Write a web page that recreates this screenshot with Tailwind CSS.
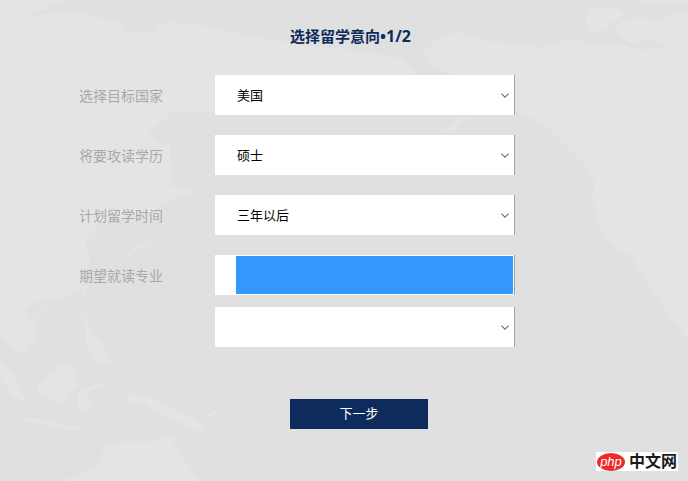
<!DOCTYPE html>
<html lang="zh">
<head>
<meta charset="utf-8">
<script src="https://cdn.jsdelivr.net/npm/@tailwindcss/browser@4"></script>
</head>
<body class="m-0">
<main class="relative w-[688px] h-[481px] overflow-hidden bg-[#e0e0e0] font-['Liberation_Sans','Noto_Sans_CJK_SC',sans-serif]">
  <svg class="absolute inset-0" width="688" height="481" viewBox="0 0 688 481" fill="#e4e4e4" aria-hidden="true">
    <!-- Asia -->
    <path d="M0 0H70L50 4 31 15 35 16 60 12 90 15 118 22 125 33 155 32 165 22 200 25 230 32 300 45 350 50 400 58 415 72 400 100 395 112H173L148 133 160 145 170 143 172 187 197 190 173 200 147 213 100 224 85 240 90 258 80 290 60 300 40 300 25 310 35 325 38 335 20 353 0 335Z"/>
    <path d="M123 257L135 245 157 240 140 248 128 257Z"/>
    <path d="M81 297L83 285 88 286 86 297Z"/>
    <path d="M35 314L40 308 44 309 40 315Z"/>
    <!-- North America -->
    <path d="M422 52L440 38 460 32 480 40 520 44 540 48 575 38 590 45 620 45 640 50 688 44V340L671 320 654 293 632 257 605 240 592 200 595 185 590 170 560 140 545 125 517 110 480 105 470 80 432 68 430 60Z"/>
    <path d="M585 20L593 7 620 9 625 15 612 22 606 30 592 32Z"/>
    <path d="M615 25L640 17 660 22 655 34 635 45 618 36Z"/>
    <path d="M655 22L670 14 688 12V48L672 46 650 40Z"/>
    <path d="M630 0H688V3L660 5Z"/>
    <path d="M441 130L460 117 477 116 465 122 450 133Z"/>
    <!-- Southeast Asia and Oceania -->
    <path d="M84 315L88 318 90 332 100 342 107 352 110 362 100 365 92 356 86 340Z"/>
    <path d="M37 385L50 372 68 362 76 375 78 385 70 392 62 407 48 397 40 398Z"/>
    <path d="M0 360L12 372 18 385 27 403 14 397 0 378Z"/>
    <path d="M23 417L45 420 65 425 83 428 70 431 45 425 28 421Z"/>
    <path d="M80 388L100 383 102 386 90 390 88 397 92 408 84 413 77 405Z"/>
    <path d="M125 396L135 393 150 398 170 408 195 420 207 434 195 430 175 420 155 412 145 404 130 402Z"/>
    <path d="M200 416L212 414 217 407 216 414 207 418Z"/>
    <path d="M63 481L96 466 105 447 120 442 145 442 162 438 172 437 178 452 190 468 200 481Z"/>
  </svg>
  <div class="relative flex flex-col items-stretch">
    <h1 class="ml-[290px] mt-[28px] h-[17px] text-[15px] leading-[17px] font-bold text-[#0e2b5e] whitespace-nowrap">选择留学意向<span class="font-['Open_Sans',sans-serif] text-[16px]">•1/2</span></h1>
    <div class="mt-[30px] flex flex-col gap-[20px]">
      <div class="flex h-[40px] items-center">
        <label class="ml-[79px] w-[136px] pt-[2px] text-[14px] leading-none text-[#a9a9a9]">选择目标国家</label>
        <div class="flex h-[40px] w-[300px] items-center justify-between border-r border-[#a3a3a3] bg-white pl-[22px] pr-[5px] text-[13px] text-black">
          <span class="pt-[2px]">美国</span>
          <svg class="mt-px" width="8" height="5" viewBox="0 0 8 5" fill="none" stroke="#8a6d72" stroke-width="1.2"><path d="M.4.6 4 4.2 7.6.6"/></svg>
        </div>
      </div>
      <div class="flex h-[40px] items-center">
        <label class="ml-[79px] w-[136px] pt-[2px] text-[14px] leading-none text-[#a9a9a9]">将要攻读学历</label>
        <div class="flex h-[40px] w-[300px] items-center justify-between border-r border-[#a3a3a3] bg-white pl-[22px] pr-[5px] text-[13px] text-black">
          <span class="pt-[2px]">硕士</span>
          <svg class="mt-px" width="8" height="5" viewBox="0 0 8 5" fill="none" stroke="#8a6d72" stroke-width="1.2"><path d="M.4.6 4 4.2 7.6.6"/></svg>
        </div>
      </div>
      <div class="flex h-[40px] items-center">
        <label class="ml-[79px] w-[136px] pt-[2px] text-[14px] leading-none text-[#a9a9a9]">计划留学时间</label>
        <div class="flex h-[40px] w-[300px] items-center justify-between border-r border-[#a3a3a3] bg-white pl-[22px] pr-[5px] text-[13px] text-black">
          <span class="pt-[2px]">三年以后</span>
          <svg class="mt-px" width="8" height="5" viewBox="0 0 8 5" fill="none" stroke="#8a6d72" stroke-width="1.2"><path d="M.4.6 4 4.2 7.6.6"/></svg>
        </div>
      </div>
      <div class="flex h-[40px] items-center">
        <label class="ml-[79px] w-[136px] pt-[2px] text-[14px] leading-none text-[#a9a9a9]">期望就读专业</label>
        <div class="h-[40px] w-[300px] border-r border-[#a3a3a3] bg-white py-px pl-[21px] pr-px">
          <div class="h-[38px] bg-[#3399ff]"></div>
        </div>
      </div>
    </div>
    <div class="ml-[215px] mt-[12px] flex h-[40px] w-[300px] items-center justify-end border-r border-[#a3a3a3] bg-white pr-[5px]">
      <svg class="mt-px" width="8" height="5" viewBox="0 0 8 5" fill="none" stroke="#8a6d72" stroke-width="1.2"><path d="M.4.6 4 4.2 7.6.6"/></svg>
    </div>
    <button class="ml-[290px] mt-[52px] h-[30px] w-[138px] bg-[#0e2b5e] text-[13px] text-white">下一步</button>
  </div>
  <div class="absolute left-[596px] top-[452px] flex h-[19px] w-[82px] items-center bg-white">
    <span class="ml-px flex h-[18px] w-[28px] items-center justify-center rounded-[50%] bg-[#ee2a2a] text-[13px] italic leading-none text-white">php</span>
    <span class="ml-[4px] text-[16px] font-bold leading-none text-[#1a1a1a]">中文网</span>
  </div>
</main>
</body>
</html>
